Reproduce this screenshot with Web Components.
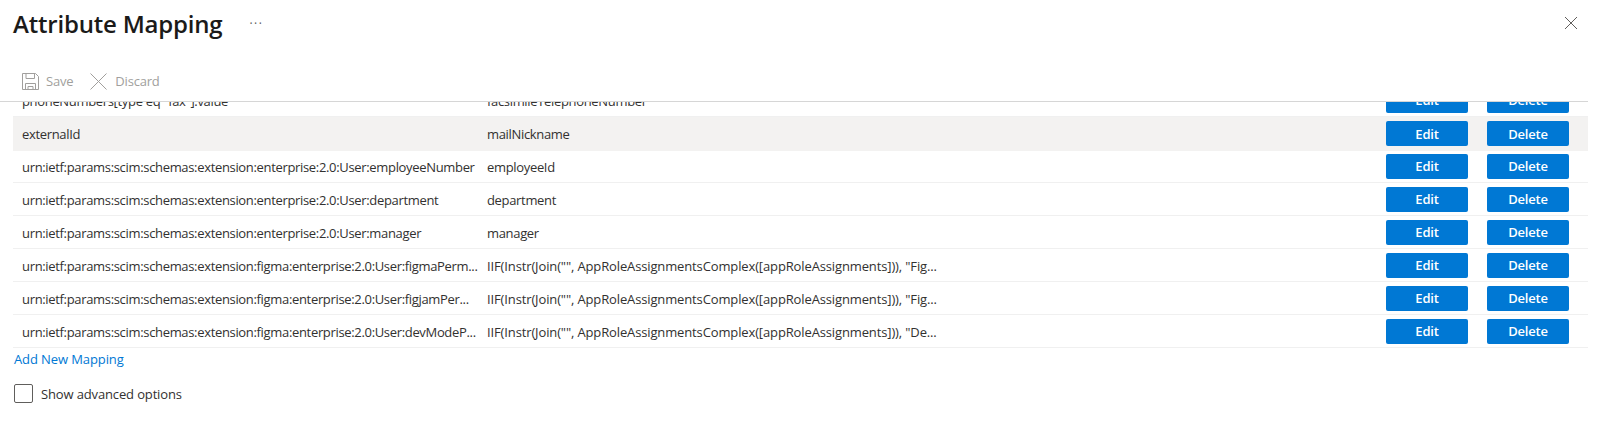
<!DOCTYPE html>
<html>
<head>
<meta charset="utf-8">
<title>Attribute Mapping</title>
<style>
  html, body { margin: 0; height: 100%; background: #fff; overflow: hidden; }
  body { font-family: "Open Sans", "Noto Sans", "Liberation Sans", sans-serif; color: #323130; }
</style>
</head>
<body>
<mapping-blade>
  <mapping-row source="phoneNumbers[type eq &quot;fax&quot;].value" target="facsimileTelephoneNumber"></mapping-row>
  <mapping-row source="externalId" target="mailNickname" active></mapping-row>
  <mapping-row source="urn:ietf:params:scim:schemas:extension:enterprise:2.0:User:employeeNumber" target="employeeId"></mapping-row>
  <mapping-row source="urn:ietf:params:scim:schemas:extension:enterprise:2.0:User:department" target="department"></mapping-row>
  <mapping-row source="urn:ietf:params:scim:schemas:extension:enterprise:2.0:User:manager" target="manager"></mapping-row>
  <mapping-row formula source="urn:ietf:params:scim:schemas:extension:figma:enterprise:2.0:User:figmaPerm..." target="IIF(Instr(Join(&quot;&quot;, AppRoleAssignmentsComplex([appRoleAssignments])), &quot;Fig..."></mapping-row>
  <mapping-row formula source="urn:ietf:params:scim:schemas:extension:figma:enterprise:2.0:User:figjamPer..." target="IIF(Instr(Join(&quot;&quot;, AppRoleAssignmentsComplex([appRoleAssignments])), &quot;Fig..."></mapping-row>
  <mapping-row formula source="urn:ietf:params:scim:schemas:extension:figma:enterprise:2.0:User:devModeP..." target="IIF(Instr(Join(&quot;&quot;, AppRoleAssignmentsComplex([appRoleAssignments])), &quot;De..."></mapping-row>
</mapping-blade>

<script>
const rowTemplate = document.createElement("template");
rowTemplate.innerHTML = `
  <style>
    :host {
      display: grid;
      grid-template-columns: 465px 449px 1fr;
      height: 33px;
      align-items: center;
      box-sizing: border-box;
      border-bottom: 1px solid #f0f0f0;
      font-size: 13px;
      letter-spacing: -0.33px;
      color: #323130;
    }
    :host([active]) { background: #f3f2f1; border-bottom-color: #f3f2f1; height: 34px; margin-bottom: -1px; }
    :host([formula]) .target { letter-spacing: -0.13px; }
    .cell {
      white-space: nowrap;
      padding: 1px 0 0 9px;
    }
    .actions {
      display: flex;
      justify-content: flex-end;
      gap: 19px;
      padding-right: 19px;
    }
    button {
      width: 82px;
      height: 25px;
      border: 0;
      border-radius: 2px;
      padding: 0;
      background: #0078d4;
      color: #fff;
      font: 600 13px "Open Sans", "Noto Sans", sans-serif;
      letter-spacing: -0.2px;
    }
  </style>
  <div class="cell source"></div>
  <div class="cell target"></div>
  <div class="actions"><button>Edit</button><button>Delete</button></div>
`;

class MappingRow extends HTMLElement {
  constructor() {
    super();
    this.attachShadow({ mode: "open" });
  }

  connectedCallback() {
    this.shadowRoot.appendChild(rowTemplate.content.cloneNode(true));
    this.shadowRoot.querySelector(".source").textContent = this.getAttribute("source");
    this.shadowRoot.querySelector(".target").textContent = this.getAttribute("target");
  }
}

const bladeTemplate = document.createElement("template");
bladeTemplate.innerHTML = `
  <style>
    :host { display: block; }
    header {
      display: flex;
      align-items: center;
      height: 47px;
      padding: 0 22px 0 13px;
    }
    h1 {
      margin: 0;
      font-size: 24px;
      font-weight: 600;
      letter-spacing: -0.2px;
      color: #1b1a19;
    }
    .more { margin-left: 27px; font-size: 12px; color: #605e5c; line-height: 1; letter-spacing: 1.5px; }
    .close { margin-left: auto; display: flex; position: relative; top: -1px; }
    .toolbar {
      display: flex;
      align-items: center;
      height: 55px;
      box-sizing: border-box;
      padding: 14px 0 0 22px;
      margin-right: 12px;
      border-bottom: 1px solid #d6d6d6;
      font-size: 13px;
      letter-spacing: -0.2px;
      color: #a19f9d;
    }
    .toolbar span { margin-left: 7px; }
    .scroller {
      height: 247px;
      overflow: hidden;
      margin: 0 12px 0 13px;
    }
    .rows { margin-top: -18px; }
    a {
      display: block;
      margin: 1px 0 0 14px;
      height: 18px;
      font-size: 13px;
      line-height: 18px;
      letter-spacing: -0.1px;
      color: #0078d4;
    }
    label {
      display: flex;
      align-items: center;
      gap: 8px;
      margin: 16px 0 0 14px;
      font-size: 13px;
      letter-spacing: -0.14px;
      color: #323130;
    }
    .box {
      width: 19px;
      height: 19px;
      box-sizing: border-box;
      border: 1px solid #605e5c;
      border-radius: 2px;
    }
  </style>
  <header>
    <h1>Attribute Mapping</h1>
    <span class="more">···</span>
    <span class="close">
      <svg width="14" height="14" viewBox="0 0 14 14" fill="none" stroke="#605e5c" stroke-width="1"><path d="M1 1l12 12M13 1L1 13"/></svg>
    </span>
  </header>
  <div class="toolbar">
    <svg width="17" height="17" viewBox="0 0 17 17" fill="none" stroke="#a19f9d" stroke-width="1"><path d="M.5.5h13l3 3v13H.5zM4 .5v5h8.500v-5M3.500 16.500v-6h10v6M6 16.500v-3h5v3"/></svg>
    <span>Save</span>
    <svg width="17" height="17" viewBox="0 0 17 17" fill="none" stroke="#a19f9d" stroke-width="1" style="margin-left:17px"><path d="M.5.5l16 16M16.500.5l-16 16"/></svg>
    <span style="margin-left:8px">Discard</span>
  </div>
  <div class="scroller"><div class="rows"><slot></slot></div></div>
  <a>Add New Mapping</a>
  <label><span class="box"></span>Show advanced options</label>
`;

class MappingBlade extends HTMLElement {
  constructor() {
    super();
    this.attachShadow({ mode: "open" });
  }

  connectedCallback() {
    this.shadowRoot.appendChild(bladeTemplate.content.cloneNode(true));
  }
}

customElements.define("mapping-row", MappingRow);
customElements.define("mapping-blade", MappingBlade);
</script>
</body>
</html>
